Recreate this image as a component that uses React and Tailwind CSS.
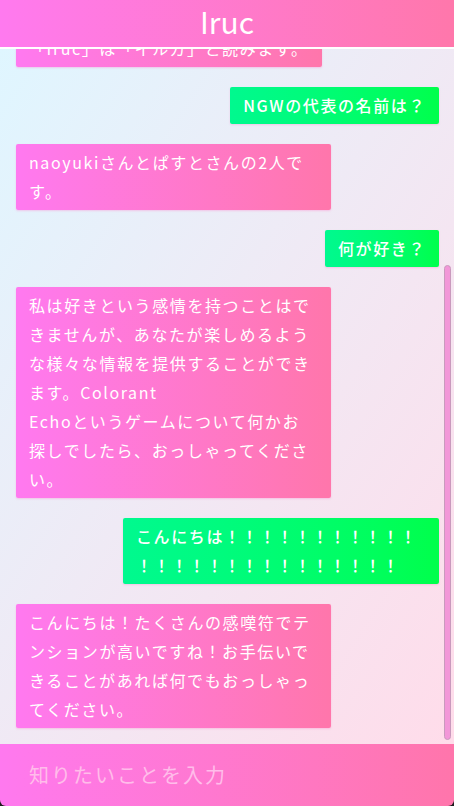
import React, { useEffect, useRef } from 'react';

// line breaks follow the reference wrap, so they are written out
const messages = [
    { from: 'user', text: 'Irucって何？' },
    { from: 'bot', text: 'こんにちは！私はNGWのアシスタン\nト、Irucです。何でも聞いてくださ\nいね。', wide: true },
    { from: 'user', text: '名前の読み方は？' },
    { from: 'bot', text: '私の名前はIrucです。\n「Iruc」は「イルカ」と読みます。' },
    { from: 'user', text: 'NGWの代表の名前は？' },
    { from: 'bot', text: 'naoyukiさんとぱすとさんの2人で\nす。', wide: true },
    { from: 'user', text: '何が好き？' },
    {
        from: 'bot',
        text: '私は好きという感情を持つことはで\nきませんが、あなたが楽しめるよう\nな様々な情報を提供することができ\nます。Colorant\nEchoというゲームについて何かお\n探しでしたら、おっしゃってくださ\nい。',
        wide: true,
    },
    {
        from: 'user',
        text: 'こんにちは！！！！！！！！！！！\n！！！！！！！！！！！！！！！',
        wide: true,
    },
    {
        from: 'bot',
        text: 'こんにちは！たくさんの感嘆符でテ\nンションが高いですね！お手伝いで\nきることがあれば何でもおっしゃっ\nてください。',
        wide: true,
    },
];

const Bubble = ({ from, text, wide }) => {
    const isUser = from === 'user';
    return (
        <div className={`flex ${isUser ? 'justify-end' : 'justify-start'}`}>
            <div
                className={`rounded-[2px] px-[13px] py-1 text-[16px] leading-[29px] tracking-[0.1em] text-white whitespace-pre-line shadow-[0_1px_2px_rgba(255,120,200,0.35)] ${
                    wide ? (isUser ? 'w-[316px]' : 'w-[315px]') : 'max-w-[315px]'
                } ${
                    isUser
                        ? 'bg-linear-to-r from-[#00f98f] to-[#00ff4b] font-medium'
                        : 'bg-linear-to-r from-[#ff79f0] to-[#ff76ab]'
                }`}
            >
                {text}
            </div>
        </div>
    );
};

export default function App() {
    const listRef = useRef(null);

    useEffect(() => {
        if (listRef.current) listRef.current.scrollTop = listRef.current.scrollHeight;
    }, []);

    return (
        <div className="h-[806px] w-[454px] bg-[#1c1c1c] font-['Noto_Sans_CJK_JP','Noto_Sans',sans-serif]">
            <div className="flex h-full flex-col overflow-hidden rounded-b-[6px]">
                {/* Header */}
                <header className="flex h-[49px] shrink-0 items-center justify-center border-b-2 border-white bg-linear-to-r from-[#ff7aef] to-[#ff77ab] pb-1 text-[30px] text-white">
                    Iruc
                </header>

                {/* Messages */}
                <div className="relative min-h-0 flex-1">
                    <div
                        ref={listRef}
                        className="h-full overflow-y-auto bg-linear-to-br from-[#dff6ff] to-[#ffdcea] [scrollbar-width:none]"
                    >
                        <div className="flex flex-col gap-5 pb-4 pl-4 pr-[15px] pt-4">
                            {messages.map((m, i) => (
                                <Bubble key={i} from={m.from} text={m.text} wide={m.wide} />
                            ))}
                        </div>
                    </div>
                    {/* scrollbar thumb */}
                    <div className="pointer-events-none absolute right-[3px] top-[216px] h-[475px] w-[7px] rounded-full border border-[#c99abd] bg-[#f297d8]" />
                </div>

                {/* Input */}
                <div className="flex h-[62px] shrink-0 items-center bg-linear-to-r from-[#ff79ef] to-[#ff75ab] px-[29px]">
                    <input
                        type="text"
                        placeholder="知りたいことを入力"
                        className="w-full bg-transparent text-[20px] tracking-[0.1em] text-white outline-none placeholder:text-[#ffbdea]"
                    />
                </div>
            </div>
        </div>
    );
}
